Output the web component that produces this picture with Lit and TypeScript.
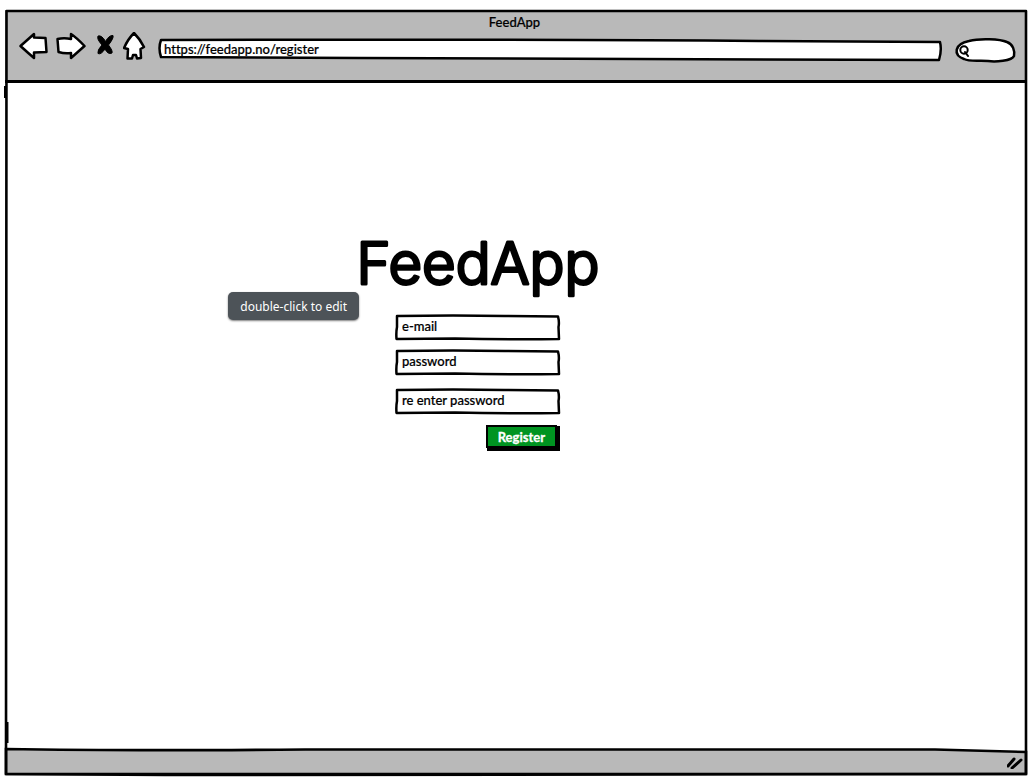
import { LitElement, html, svg, css } from "lit";
import { customElement, property } from "lit/decorators.js";

/** Hand-drawn outlines, each stretched over the box that holds it. */
const OUTLINES = {
  field: {
    box: "0 0 165 26",
    shape: "M2 2 Q60 1 110 2 L163 2.5 Q164.5 8 163.5 13 L164 25 Q110 25.5 60 24.5 L1.5 25 Q1 18 2 13 Z",
  },
  address: {
    box: "0 0 783 22",
    shape: "M2 1 Q400 0 600 2 L781 3 Q783 11 780 21 Q400 20 200 19 L2 18 Q-1 9 2 1 Z",
  },
  search: {
    box: "0 0 60 25",
    shape: "M14 3 C25 0 45 1 52 4 C58 6 60 13 59 18 C57 23 40 24 33 23 C25 22 15 24 9 21 C-2 17 -1 6 14 3 Z",
  },
};

@customElement("sketch-box")
export class SketchBox extends LitElement {
  @property() outline: keyof typeof OUTLINES = "field";

  static styles = css`
    :host { display: block; position: relative; }
    .outline { position: absolute; inset: 0; width: 100%; height: 100%; overflow: visible; }
    .outline path {
      fill: #fff;
      stroke: #000;
      stroke-width: 2.5px;
      stroke-linejoin: round;
      vector-effect: non-scaling-stroke;
    }
    .content { position: relative; display: flex; align-items: center; height: 100%; }
  `;

  render() {
    const o = OUTLINES[this.outline];
    return html`
      <svg class="outline" viewBox=${o.box} preserveAspectRatio="none" aria-hidden="true">
        ${svg`<path d=${o.shape}></path>`}
      </svg>
      <div class="content"><slot></slot></div>
    `;
  }
}

@customElement("app-root")
export class AppRoot extends LitElement {
  static styles = css`
    :host {
      display: block;
      background: #fff;
      color: #000;
      font: 500 13px/18px Lato, "Open Sans", sans-serif;
      font-variant-ligatures: none;
      -webkit-text-stroke: 0.2px currentColor;
    }
    * { box-sizing: border-box; }
    .page { display: flex; min-height: 100vh; padding: 10px 9px 3px 5px; }
    .window { position: relative; flex: 1; display: flex; flex-direction: column; }
    .frame { position: absolute; inset: 0; width: 100%; height: 100%; overflow: visible; pointer-events: none; }
    .frame path { fill: none; stroke: #000; stroke-width: 2.6px; stroke-linejoin: round; vector-effect: non-scaling-stroke; }
    .frame .heavy { stroke-width: 3px; }
    .top { padding: 3px 12px 19px 14px; background: #b9b9b9; border-bottom: 3px solid #000; }
    .title { margin: 0; padding-right: 5px; text-align: center; }
    .bar { display: flex; align-items: center; gap: 13px; height: 30px; }
    .nav { display: flex; align-items: center; gap: 8px; }
    .icon { display: block; padding: 0; border: 0; background: none; }
    .icon svg { display: block; }
    .icon path { fill: #fff; stroke: #000; stroke-width: 2.5px; stroke-linejoin: round; }
    .icon .solid { fill: #000; stroke-width: 1px; }
    .address { flex: 1; height: 22px; margin-top: 8px; }
    .search { width: 60px; height: 25px; margin-top: 8px; }
    .search svg { flex: none; margin-left: 3px; fill: none; stroke: #000; stroke-width: 2px; stroke-linecap: round; }
    input {
      width: 100%;
      min-width: 0;
      height: 18px;
      margin-bottom: 2px;
      padding: 0 7px;
      border: 0;
      outline: 0;
      background: none;
      color: inherit;
      font: inherit;
      font-variant-ligatures: none;
      -webkit-text-stroke: inherit;
    }
    .address input { padding: 0 5px; }
    .search input { padding: 0 8px 0 2px; }
    input::placeholder { color: #000; opacity: 1; }
    .main { flex: 1; display: flex; flex-direction: column; align-items: center; padding: 147px 76px 32px 0; }
    .panel { position: relative; display: flex; flex-direction: column; width: 240px; }
    .brand { margin: 0; }
    .brand svg { display: block; overflow: visible; }
    .brand text {
      font-family: Inter, "Open Sans", sans-serif;
      font-size: 58px;
      font-weight: 300;
      text-anchor: middle;
      stroke: #000;
      stroke-width: 3px;
      stroke-linejoin: round;
    }
    .tip {
      position: absolute;
      top: 62px;
      right: calc(100% - 1px);
      padding: 6px 12px 4px;
      border-radius: 5px;
      background: #4d5358;
      box-shadow: 0 1px 2px rgba(0, 0, 0, 0.5);
      color: #fff;
      font: 12px/18px "Noto Sans", sans-serif;
      white-space: nowrap;
      -webkit-text-stroke: 0;
    }
    .form { display: flex; flex-direction: column; width: 165px; margin: 12px 0 0 37px; }
    .field { height: 26px; margin-bottom: 9px; }
    .repeat { margin-top: 4px; margin-bottom: 11px; }
    .register {
      align-self: flex-end;
      height: 23px;
      margin: 0 3px 3px 0;
      padding: 0 10px;
      border: 2px solid #000;
      background: #009421;
      box-shadow: 2px 2px 0 1px #000;
      color: #fff;
      font: 700 13px/18px Lato, "Open Sans", sans-serif;
      -webkit-text-stroke: 0.3px #fff;
    }
    .bottom { position: relative; display: flex; justify-content: flex-end; align-items: center; height: 28px; padding-right: 3px; }
    .grip { position: relative; stroke: #000; stroke-width: 3px; stroke-linecap: round; fill: none; }
    .base { position: absolute; inset: 0; width: 100%; height: 100%; overflow: visible; }
    .base path { fill: #b9b9b9; stroke: #000; stroke-width: 2.6px; vector-effect: non-scaling-stroke; }
  `;

  render() {
    return html`
      <div class="page">
        <div class="window">
          <header class="top">
            <p class="title">FeedApp</p>
            <div class="bar">
              <nav class="nav" aria-label="Browser">
                <button class="icon" aria-label="Back">
                  <svg width="29" height="28" viewBox="0 0 29 28"><path d="M1.5 14 L15 2 L15 5.5 L26.5 6 L27.5 20 L15 20.5 L15 26 Q8 20 1.5 14 Z"></path></svg>
                </button>
                <button class="icon" aria-label="Forward">
                  <svg width="30" height="28" viewBox="0 0 30 28"><path d="M1.5 7 Q8 5.5 15 7 L15 2 Q21 6 28.5 14 L15 26 L15 21 Q9 22 2.5 20 Z"></path></svg>
                </button>
                <button class="icon" aria-label="Stop">
                  <svg width="21" height="28" viewBox="0 0 21 28"><path class="solid" d="M4 4 Q8 3 11.5 9.5 Q15 3 19 3.5 Q20 6 14.5 13 Q19 19 18 21 Q14 23 11 17 Q7 23 4 21.5 Q3 18 8 13 Q2.500 7 4 4 Z"></path></svg>
                </button>
                <button class="icon" aria-label="Home">
                  <svg width="23" height="28" viewBox="0 0 23 28"><path d="M11 1 Q17 7 21 15 L17.500 17 L18 26 L14 26.500 L13 23 L10 23 L9 26.500 L4.500 26.500 L5 17 L1 16 Q5 7 11 1 Z"></path></svg>
                </button>
              </nav>
              <sketch-box class="address" outline="address">
                <input aria-label="Address" .value=${"https://feedapp.no/register"} />
              </sketch-box>
              <sketch-box class="search" outline="search">
                <svg width="12" height="14" viewBox="0 0 12 14" aria-hidden="true">
                  <circle cx="6" cy="7" r="3.7"></circle><path d="M7 9 L10 13"></path>
                </svg>
                <input type="text" aria-label="Search" />
              </sketch-box>
            </div>
          </header>

          <main class="main">
            <div class="panel">
              <h1 class="brand">
                <svg width="240" height="72"><text x="120" y="54">FeedApp</text></svg>
              </h1>
              <div class="tip" role="tooltip">double-click to edit</div>
              <form class="form" @submit=${(e: Event) => e.preventDefault()}>
                <sketch-box class="field"><input type="email" aria-label="e-mail" placeholder="e-mail" /></sketch-box>
                <sketch-box class="field"><input type="password" aria-label="password" placeholder="password" /></sketch-box>
                <sketch-box class="field repeat"><input type="password" aria-label="re enter password" placeholder="re enter password" /></sketch-box>
                <button class="register">Register</button>
              </form>
            </div>
          </main>

          <footer class="bottom">
            <svg class="base" viewBox="0 0 1022 28" preserveAspectRatio="none" aria-hidden="true">
              <path d="M1 1 Q120 3 300 1.5 L930 1.5 L1021 4 L1021 26 Q500 26 160 27 L1 26 Z"></path>
            </svg>
            <svg class="grip" width="17" height="14" viewBox="0 0 17 14" aria-hidden="true">
              <path d="M1 11 L7 4 M5 13 L14 5"></path>
            </svg>
          </footer>

          <svg class="frame" viewBox="0 0 1022 766" preserveAspectRatio="none" aria-hidden="true">
            <path d="M1.5 1 L1021 1 L1021 764 L1 764 Z"></path>
            <path class="heavy" d="M.5 76 V88 M2 712 V733"></path>
          </svg>
        </div>
      </div>
    `;
  }
}
